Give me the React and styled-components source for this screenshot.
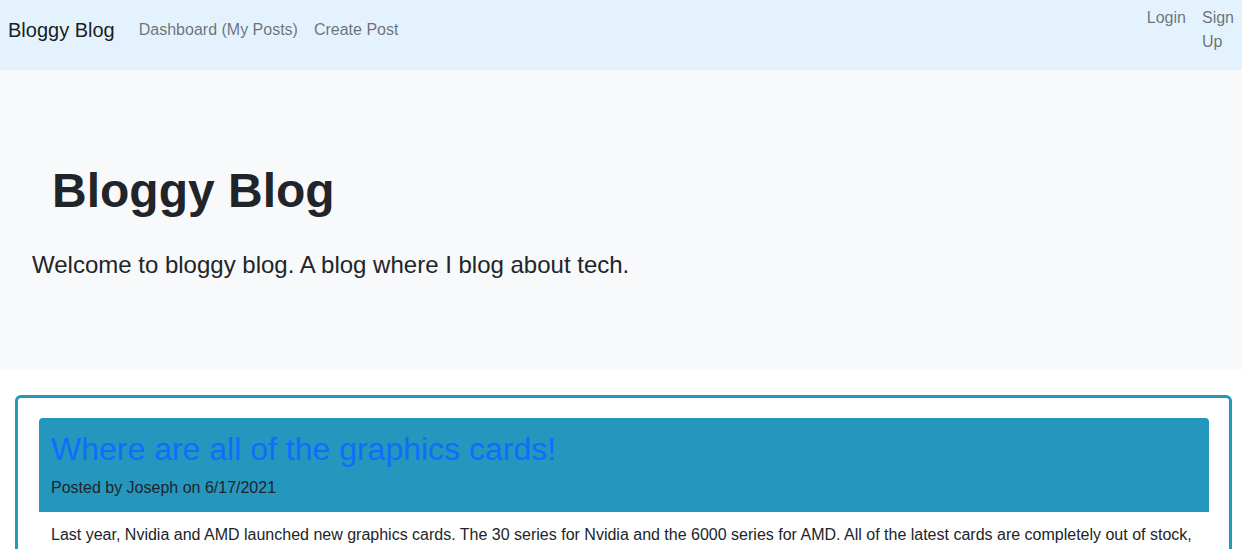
import React from "react";
import styled, { createGlobalStyle } from "styled-components";

const GlobalStyle = createGlobalStyle`
  * {
    box-sizing: border-box;
  }

  body {
    margin: 0;
    font-family: "Liberation Sans", Arial, sans-serif;
    font-size: 16px;
    line-height: 1.5;
    color: #212529;
    background: #fff;
  }
`;

const Navbar = styled.nav`
  display: flex;
  align-items: flex-start;
  height: 70px;
  padding: 6px 0 0 8px;
  background: #e3f2fd;
`;

const NavLeft = styled.div`
  display: flex;
  align-items: center;
  height: 48px;
`;

const Brand = styled.a`
  margin-right: 16px;
  font-size: 20px;
  line-height: 30px;
  color: rgba(0, 0, 0, 0.9);
  text-decoration: none;
`;

const NavRight = styled.div`
  display: flex;
  margin-left: auto;
`;

const NavLink = styled.a`
  display: block;
  padding: 0 8px;
  color: rgba(0, 0, 0, 0.55);
  text-decoration: none;
  width: ${(p) => (p.$narrow ? "min-content" : "auto")};
  box-sizing: content-box;
`;

const Jumbotron = styled.header`
  padding: 92px 32px 87px;
  background: #f8f9fa;
`;

const Title = styled.h1`
  margin: 0 0 27px;
  padding-left: 20px;
  font-size: 48px;
  font-weight: 700;
  line-height: 1.2;
`;

const Lead = styled.p`
  margin: 0;
  font-size: 24px;
  line-height: 36px;
`;

const PostList = styled.main`
  margin: 25px 10px 0 15px;
  padding: 20px 20px 20px 21px;
  border: 3px solid #2596be;
  border-radius: 6px;
`;

const Post = styled.article`
  display: flex;
  flex-direction: column;
`;

const PostHeader = styled.div`
  padding: 12px;
  background: #2596be;
  border-radius: 4px 4px 0 0;
`;

const PostTitle = styled.h2`
  margin: 0 0 8px;
  font-size: 32px;
  font-weight: 400;
  line-height: 1.2;

  a {
    color: #0d6efd;
    text-decoration: none;
  }
`;

const Meta = styled.p`
  margin: 0;
`;

const PostBody = styled.p`
  margin: 0;
  padding: 11px 12px;
`;

export default function App() {
  return (
    <>
      <GlobalStyle />
      <Navbar>
        <NavLeft>
          <Brand href="#">Bloggy Blog</Brand>
          <NavLink href="#">Dashboard (My Posts)</NavLink>
          <NavLink href="#">Create Post</NavLink>
        </NavLeft>
        <NavRight>
          <NavLink href="#" $narrow>
            Login
          </NavLink>
          <NavLink href="#" $narrow>
            Sign Up
          </NavLink>
        </NavRight>
      </Navbar>

      <Jumbotron>
        <Title>Bloggy Blog</Title>
        <Lead>Welcome to bloggy blog. A blog where I blog about tech.</Lead>
      </Jumbotron>

      <PostList>
        <Post>
          <PostHeader>
            <PostTitle>
              <a href="#">Where are all of the graphics cards!</a>
            </PostTitle>
            <Meta>Posted by Joseph on 6/17/2021</Meta>
          </PostHeader>
          <PostBody>
            Last year, Nvidia and AMD launched new graphics cards. The 30 series
            for Nvidia and the 6000 series for AMD. All of the latest cards are
            completely out of stock, and scalpers are reselling them for double
            the price.
          </PostBody>
        </Post>
      </PostList>
    </>
  );
}
